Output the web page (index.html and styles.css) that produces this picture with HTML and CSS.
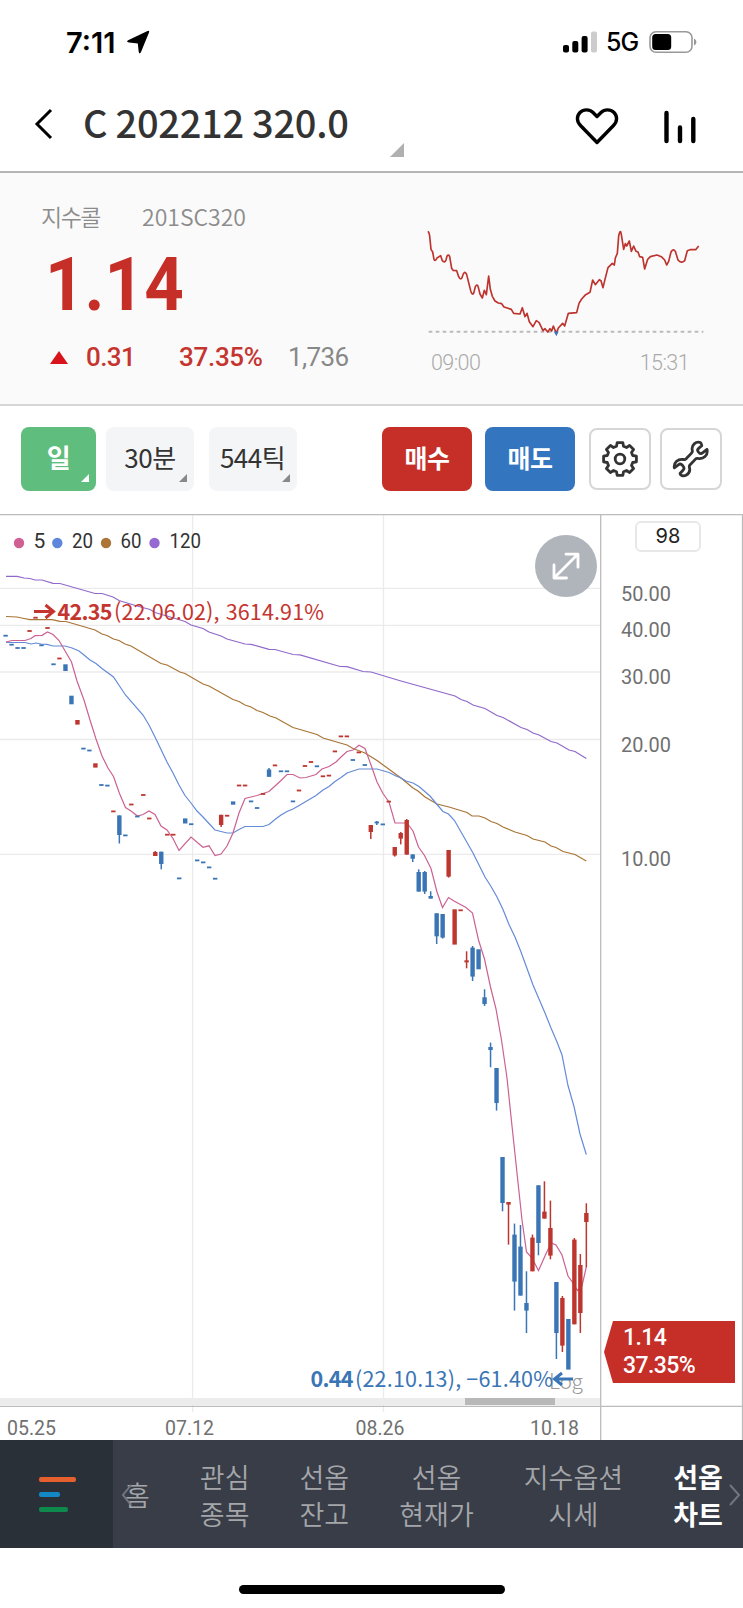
FILE: index.html
```html
<!DOCTYPE html>
<html lang="ko">
<head>
  <meta charset="UTF-8">
  <meta name="viewport" content="width=device-width, initial-scale=1.0">
  <title>선옵차트</title>
  <link rel="stylesheet" href="styles.css">
</head>
<body>
  <div class="status">
    <span class="time">7:11</span>
    <svg class="loc" width="24" height="24" viewBox="0 0 24 24"><path d="M23 2.500 15 22q-1.500 3-2.300-.3L11.800 13.500 3 12.500q-3.600-.8-.4-2.400L21 1.200q2.800-1.200 2 1.300z"/></svg>
    <svg class="signal" width="36" height="22" viewBox="0 0 36 22">
      <rect x="0" y="14" width="6" height="7.500" rx="2"/>
      <rect x="9.300" y="10" width="6" height="11.500" rx="2"/>
      <rect x="18.600" y="5" width="6" height="16.500" rx="2"/>
      <rect x="28" y="0.500" width="6" height="21" rx="2" fill="#ccc"/>
    </svg>
    <span class="net">5G</span>
    <svg width="48" height="24" viewBox="0 0 48 24">
      <rect x="1" y="1.700" width="42" height="20.600" rx="6" fill="none" stroke="#999" stroke-width="1.600"/>
      <rect x="3.200" y="4" width="19" height="16" rx="3.500"/>
      <path d="M45 8.500q2.500 1 2.500 3.500t-2.500 3.500z" fill="#999"/>
    </svg>
  </div>

  <div class="header">
    <svg class="back" width="20" height="32" viewBox="0 0 20 32"><path d="M17 2 3 16l14 14" fill="none" stroke="#000" stroke-width="3"/></svg>
    <h1>C 202212 320.0</h1>
    <i class="corner"></i>
    <svg class="heart" width="44" height="38" viewBox="0 0 44 38"><path d="M22 35.500 5.500 18.500C1.500 14.500 1.500 9 5 5.500s9.500-3.500 13 0l4 4 4-4c3.500-3.500 9.500-3.500 13 0s3.500 9-.5 13z" fill="none" stroke="#000" stroke-width="3.400" stroke-linejoin="round"/></svg>
    <svg class="bars" width="34" height="34" viewBox="0 0 34 34"><path d="M3.500 3v28M17 17.500V31M30.300 9v22" stroke="#000" stroke-width="4.400" stroke-linecap="round"/></svg>
  </div>

  <div class="quote">
    <div class="info">
      <div class="code"><span>지수콜</span><span>201SC320</span></div>
      <div class="price">1.14</div>
      <div class="diff">
        <i class="up"></i>
        <span class="chg">0.31</span>
        <span class="rate">37.35%</span>
        <span class="vol">1,736</span>
      </div>
    </div>
    <div class="mini">
      <svg width="290" height="125" viewBox="60 75 870 375">
        <path d="M86 395H910" stroke="#bbb" stroke-width="6" stroke-dasharray="11 10"/>
        <path d="M84 94Q89 100 90 118L93 148 98 156 102 178Q106 186 111 174L122 167 127 182Q134 190 138 180L141 168Q146 162 149 170L155 205 159 211 170 212 176 230Q183 244 187 230 193 208 200 224L212 272Q218 290 222 276L226 260Q232 250 235 262L240 282 247 294 253 271 259 284 266 228 271 268 277 289 285 303 295 309 305 311 312 321 334 328 341 340 360 342 367 323 375 350 381 340 388 365 399 380 409 362 417 367 429 392 435 386 443 396 450 386 455 393 460 378 469 400 475 384 488 370 494 378 505 340 530 338 537 310 545 297 557 284 570 277 578 240 586 254 598 239 603 242 609 263 615 238 624 203 637 190 643 195 646 174 652 160 656 108Q661 84 664 104L671 148 676 131 680 138 688 123 694 154 701 138 708 154 714 156 719 170 728 172 734 207 743 178 751 170 771 165 784 170 794 180 800 195 806 184 813 156Q820 144 826 154L834 180Q844 192 854 182L862 152 870 149 887 149 896 138" fill="none" stroke="#bd342e" stroke-width="5" stroke-linejoin="round"/>
        <path d="M464 394 469 403 473 394" fill="none" stroke="#3a75bd" stroke-width="5"/>
      </svg>
      <div class="hours"><span>09:00</span><span>15:31</span></div>
    </div>
  </div>

  <div class="tools">
    <div class="btn day">일<i></i></div>
    <div class="btn min">30분<i></i></div>
    <div class="btn tick">544틱<i></i></div>
    <div class="btn buy">매수</div>
    <div class="btn sell">매도</div>
    <div class="btn icon gear">
      <svg width="38" height="38" viewBox="0 0 38 38" fill="none" stroke="#333" stroke-width="2.800" stroke-linejoin="round">
        <path id="cog"/>
        <circle cx="19" cy="19" r="4.800"/>
      </svg>
    </div>
    <div class="btn icon">
      <svg width="38" height="38" viewBox="0 0 38 38" fill="none" stroke="#333" stroke-width="2.800" stroke-linejoin="round" stroke-linecap="round">
        <path d="M28.500 2.600C24 1 19 5 20.300 10.500c.3 1.200 0 1.800-.8 2.600l-5.400 5.700c-.8.8-1.500 1-2.600.7C6 18.500 1.500 22.500 2.300 27.800l4-3c1.400-1 3-.8 4 .4l1 1.300c1 1.300.8 2.600-.3 3.700L8 33.500c.2 2.300 3.600 3 6 1.800 3-1.600 4.300-4.800 3.400-8-.3-1 0-1.800.7-2.500l5.400-5.700c.8-.8 1.500-1 2.500-.7 5.500 1 10.300-3 9-9l-4.500 3.500c-1.200 1-2.600.7-3.500-.3l-.7-.8c-1-1.200-.9-2.500.3-3.500l3.200-2.600c-.2-1.400-.6-2.700-1.300-3.100z"/>
      </svg>
    </div>
  </div>

  <div class="chart">
    <svg class="plot" width="743" height="926" viewBox="0 514 743 926">
      <path class="grid" d="M0 588.400H600M0 625.300H600M0 672H600M0 739.500H600M0 854.400H600M192.600 515V1412M383.500 515V1412"/>
      <rect x="0" y="1398" width="600" height="7" fill="#ececec"/>
      <rect x="465" y="1398" width="90" height="7" fill="#b8b8b8"/>
      <path class="frame" d="M0 514.500H743M0 1406.300H743M600.700 514V1440M742.500 514V1440"/>

      <text class="log" x="549" y="1389" textLength="34">Log</text>
      <g id="ma"></g>
      <g id="candles"></g>

      <g class="legend">
        <circle cx="19" cy="543" r="5.200" fill="#d05f94"/><text x="33.500" y="548">5</text>
        <circle cx="57.300" cy="543" r="5.200" fill="#5e87dc"/><text x="72" y="548" textLength="21" lengthAdjust="spacingAndGlyphs">20</text>
        <circle cx="106" cy="543" r="5.200" fill="#ad7438"/><text x="120.500" y="548" textLength="21" lengthAdjust="spacingAndGlyphs">60</text>
        <circle cx="154.500" cy="543" r="5.200" fill="#9668d2"/><text x="169.500" y="548" textLength="31.500" lengthAdjust="spacingAndGlyphs">120</text>
      </g>

      <g class="note high">
        <path d="M34 611.500H53M45.500 605l8 6.500-8 6.500"/>
        <text class="b" x="57.500" y="619.500" textLength="55">42.35</text>
        <text x="114" y="619.500" textLength="210">(22.06.02), 3614.91%</text>
      </g>
      <g class="note low">
        <text class="b" x="310.500" y="1387" textLength="43">0.44</text>
        <text x="355" y="1387" textLength="198">(22.10.13), −61.40%</text>
        <path d="M573 1379H555M562 1373l-7.500 6 7.500 6"/>
      </g>

      <g class="axis">
        <text x="621" y="600.500" textLength="50" lengthAdjust="spacingAndGlyphs">50.00</text>
        <text x="621" y="637" textLength="50" lengthAdjust="spacingAndGlyphs">40.00</text>
        <text x="621" y="683.700" textLength="50" lengthAdjust="spacingAndGlyphs">30.00</text>
        <text x="621" y="751.500" textLength="50" lengthAdjust="spacingAndGlyphs">20.00</text>
        <text x="621" y="866" textLength="50" lengthAdjust="spacingAndGlyphs">10.00</text>
        <text x="7" y="1435" textLength="49" lengthAdjust="spacingAndGlyphs">05.25</text>
        <text x="165" y="1435" textLength="49" lengthAdjust="spacingAndGlyphs">07.12</text>
        <text x="355.500" y="1435" textLength="49" lengthAdjust="spacingAndGlyphs">08.26</text>
        <text x="530" y="1435" textLength="49" lengthAdjust="spacingAndGlyphs">10.18</text>
      </g>
    </svg>
    <div class="count">98</div>
    <div class="expand">
      <svg width="30" height="30" viewBox="0 0 30 30"><path d="M3.500 26.500 26.500 3.500M15 3.200h12v13M3 14v13h12.500" fill="none" stroke="#fff" stroke-width="2.800" stroke-linecap="round" stroke-linejoin="round"/></svg>
    </div>
    <div class="tag">1.14<br><span>37.35%</span></div>
  </div>

  <div class="nav">
    <div class="menu"><i></i><i></i><i></i></div>
    <ul>
      <li>홈</li>
      <li>관심<br>종목</li>
      <li>선옵<br>잔고</li>
      <li>선옵<br>현재가</li>
      <li>지수옵션<br>시세</li>
      <li class="active">선옵<br>차트</li>
    </ul>
    <svg class="prev" width="13" height="24" viewBox="0 0 13 24"><path d="M10 2 2 12l8 10"/></svg>
    <svg class="next" width="13" height="24" viewBox="0 0 13 24"><path d="M2 2l9 10-9 10"/></svg>
  </div>
  <div class="home"><i></i></div>
  <script src="chart.js"></script>
</body>
</html>
```
FILE: styles.css
```css
*{
  margin: 0;
  padding: 0;
  box-sizing: border-box;
}
body{
  width: 743px;
  background-color: #fff;
  font-family: "Noto Sans CJK KR", sans-serif;
  color: #333;
}
li{
  list-style: none;
}
svg{
  display: block;
  flex: none;
}

/* 상태바 */
.status{
  display: flex;
  align-items: center;
  height: 84px;
  padding-left: 66px;
  font-family: Inter, sans-serif;
  color: #000;
}
.time{
  width: 60px;
  font-size: 29px;
  font-weight: 600;
  letter-spacing: 0;
}
.signal{
  margin-left: 413px;
}
.net{
  width: 43px;
  margin-left: 7px;
  font-size: 25px;
  font-weight: 500;
  letter-spacing: -1px;
}

/* 종목 헤더 */
.header{
  display: flex;
  align-items: center;
  height: 89px;
  padding: 0 0 7px 34px;
  border-bottom: 2px solid #b4b6b6;
}
h1{
  width: 306px;
  margin: -5px 0 0 29px;
  font-size: 38px;
  font-weight: 500;
  line-height: 54px;
  letter-spacing: -.3px;
  word-spacing: -2px;
  white-space: nowrap;
}
.corner{
  align-self: flex-end;
  margin: 0 0 7px 1px;
  border-left: 14px solid transparent;
  border-bottom: 14px solid #b0b0b0;
}
.heart{
  margin: 4px 0 0 171px;
}
.bars{
  margin: 5px 0 0 44px;
}

/* 현재가 */
.quote{
  display: flex;
  height: 233px;
  background-color: #fafafa;
  border-bottom: 2px solid #d6d6d6;
}
.info{
  width: 420px;
}
.code{
  display: flex;
  height: 61px;
  padding: 26px 0 0 41px;
  font-size: 23px;
  font-weight: 350;
  line-height: 34px;
  color: #8c8c8c;
}
.code span:first-child{
  width: 101px;
  letter-spacing: -1.5px;
}
.price{
  width: 160px;
  height: 88px;
  padding-left: 45px;
  font-family: Roboto, sans-serif;
  font-size: 75px;
  font-weight: 700;
  line-height: 101px;
  transform: scaleX(.92);
  transform-origin: 45px 0;
  color: #c62e28;
}
.diff{
  display: flex;
  align-items: center;
  height: 70px;
  padding: 0 0 0 50px;
  font-family: Roboto, sans-serif;
  font-size: 26px;
  font-weight: 500;
  color: #c5352f;
}
.up{
  border: solid transparent;
  border-width: 0 9px 13px;
  border-bottom-color: #d8131b;
}
.chg{
  width: 93px;
  margin-left: 18px;
  letter-spacing: -.6px;
}
.rate{
  width: 109px;
  letter-spacing: -.3px;
}
.vol{
  color: #888;
  font-weight: 400;
  letter-spacing: -.6px;
}
.mini{
  padding-top: 52px;
}
.hours{
  display: flex;
  justify-content: space-between;
  width: 258px;
  margin-left: 11px;
  font-family: Roboto, sans-serif;
  font-size: 21.500px;
  font-weight: 300;
  line-height: 25px;
  letter-spacing: -.6px;
  color: #aaa;
}

/* 버튼 */
.tools{
  display: flex;
  height: 108px;
  padding: 21px 0 0 21px;
}
.btn{
  position: relative;
  display: flex;
  justify-content: center;
  align-items: center;
  width: 90px;
  height: 64px;
  padding-bottom: 5px;
  border-radius: 8px;
  font-size: 26px;
  letter-spacing: -.5px;
}
.btn i{
  position: absolute;
  right: 7px;
  bottom: 9px;
  border-left: 8px solid transparent;
  border-bottom: 8px solid #888;
}
.day{
  width: 75px;
  background-color: #5fbd7d;
  color: #fff;
  font-weight: 700;
}
.day i{
  border-bottom-color: #fff;
}
.min, .tick{
  width: 88px;
  margin-left: 10px;
  background-color: #f4f5f7;
}
.tick{
  margin-left: 15px;
  padding-right: 1px;
}
.buy, .sell{
  color: #fff;
  font-weight: 700;
  font-size: 25px;
}
.buy{
  margin-left: 85px;
  background-color: #c62e28;
}
.sell{
  margin-left: 13px;
  background-color: #3375bf;
}
.icon{
  width: 62px;
  height: 62px;
  margin: 1px 0 0 9px;
  padding: 0;
  border: 2px solid #d6d6d6;
}
.gear{
  margin-left: 14px;
}

/* 차트 */
.chart{
  position: relative;
  height: 926px;
}
.grid{
  stroke: #ebebeb;
  stroke-width: 1.300;
}
.frame{
  stroke: #bcbcbc;
  stroke-width: 1.300;
}
#ma polyline{
  fill: none;
  stroke-width: 1.200;
}
.legend, .axis{
  font-family: Roboto, sans-serif;
  font-size: 21px;
  fill: #333;
}
.axis{
  fill: #707070;
}
.log{
  font-size: 21px;
  font-weight: 300;
  fill: #999;
}
.note{
  font-size: 21.500px;
}
.note .b{
  font-weight: 700;
}
.note path{
  fill: none;
  stroke-width: 3;
}
.high{
  fill: #c5352f;
  stroke: none;
}
.high path{
  stroke: #c5352f;
}
.low{
  fill: #3a75b5;
}
.low path{
  stroke: #3a75b5;
}
.count{
  position: absolute;
  left: 635px;
  top: 7px;
  width: 66px;
  height: 31px;
  border: 2px solid #e8e8e8;
  border-radius: 6px;
  font-family: Inter, sans-serif;
  font-size: 20px;
  line-height: 27px;
  text-align: center;
  color: #222;
}
.expand{
  position: absolute;
  left: 535px;
  top: 21px;
  display: flex;
  justify-content: center;
  align-items: center;
  width: 62px;
  height: 62px;
  border-radius: 50%;
  background-color: #b0b5bc;
}
.tag{
  position: absolute;
  left: 604px;
  top: 807px;
  width: 131px;
  height: 62px;
  padding: 3px 0 0 19px;
  background-color: #c62e28;
  clip-path: polygon(9px 0, 100% 0, 100% 100%, 9px 100%, 0 50%);
  font-family: Roboto, sans-serif;
  font-size: 23px;
  font-weight: 500;
  line-height: 28px;
  letter-spacing: -.6px;
  color: #fff;
}

/* 하단 메뉴 */
.nav{
  position: relative;
  display: flex;
  height: 108px;
  background-color: #383d47;
}
.menu{
  display: flex;
  flex-direction: column;
  gap: 10px;
  width: 113px;
  padding: 37px 0 0 39px;
  background-color: #2a3038;
}
.menu i{
  width: 37px;
  height: 5px;
  border-radius: 2px;
  background-color: #e5602e;
}
.menu i:nth-child(2){
  width: 21px;
  background-color: #1487c7;
}
.menu i:nth-child(3){
  width: 29px;
  background-color: #0e8a4c;
}
.nav ul{
  display: flex;
  align-items: center;
  gap: 50px;
  padding: 1px 0 0 12px;
}
.nav li{
  font-size: 27px;
  font-weight: 350;
  line-height: 37px;
  text-align: center;
  white-space: nowrap;
  color: #a4a6aa;
}
.nav .active{
  font-weight: 700;
  color: #fff;
}
.prev, .next{
  position: absolute;
  top: 43px;
  left: 121px;
  fill: none;
  stroke: #72767d;
  stroke-width: 2;
}
.next{
  left: 728px;
}
.home{
  display: flex;
  justify-content: center;
  padding-top: 37px;
  height: 60px;
}
.home i{
  width: 266px;
  height: 9px;
  border-radius: 5px;
  background-color: #000;
}
```
FILE: chart.js
```js
var NS = "http://www.w3.org/2000/svg";
var RED = "#bd362f", BLUE = "#3a75b5";

// 이동평균선
var lines = [
  ["#9068cc", "6,576.3 17,576.3 24,578 30,578.5 35,580 42,580 53,583.3 60,583.5 95,593.5 102,593.5 113,597 119,600.5 137,606 150,609.5 155,612.5 172,617.5 185,621.5 191,625 203,628.5 209,632 221,636 227,639 245,644 251,644.3 269,649.3 275,649.5 293,654.5 300,654.8 340,666.5 347,666.7 363,671.5 371,672 401,681 455,696 461,699.5 467,701.5 473,705 485,708.5 497,715.5 503,717.5 521,727.5 527,729.5 533,733 539,735 551,741.5 557,743 569,750 575,751.5 586.3,758.5"],
  ["#a87434", "6,616.5 17,617 24,618.5 30,619.7 52,619.7 60,621.3 66,621.5 78,625 95,630 102,634 107,635.5 113.5,639 119,640.5 125,644 131,646 161,663.5 167,665 180,672 185,673.5 203,684 209,686 233,699.5 239,701.5 245,705 251,707 257,710.5 263,712.5 270,716 276,718 293,727.5 300,729.5 317,734.5 323,738 347,745 353,748.5 365,753 377,760.5 401,778 413,788 418,791 425,797 437,804 449,807 467,812.5 472,816 479,816 485,818 491,821.5 497,823.5 503,827 515,832 527,835.5 533,839 545,842 551,846 556,847.5 563,851.5 575,854.5 586.3,861"],
  ["#648bd8", "6,642.5 25,642.5 31,644 36,643 41,644 47,644.3 53,646 65,646 72,648 79,651 84,655 90,660 96,663.5 102,668.5 113.5,677 119.5,686 125.5,695 143,715 149,725 155,737 167,762 173,773 179,785 185,795.5 191,803 197,811 203,817 209,823.5 215,830 221,831.5 227,833 233,833 239,829.5 245,826.5 263,826.5 269,824.5 275,819.5 281,815 287,811.5 293,809 300,805 316,795.5 323,790 329,786.5 335,781.5 341,777.5 347,773 359,769 377,769 389,772.5 396,776 401,778 406,781 413,783 419,786.5 430,796 437,804.5 443,811.5 448.5,814 454.5,820.5 473,853 479,865 485,877 491,886.5 497,897 503,909.5 509,924.5 515,937 521,952 527,968.5 533,985 539,999 545,1013 551,1028 557,1042 562,1055 568,1085.5 574,1106.5 580,1134 586.3,1154.5"],
  ["#cb6291", "6,642 12,640.5 25,640.5 31,638.5 35,635.7 42,635.3 47.5,632 53,634.5 59,640.5 71.5,662 77,681 84,700 90,720 96,739 102,756 108,768 113.5,776.5 119.5,793.5 125.5,807.5 131,811 137.5,816 143,814.5 149,811 155,814.5 161,826 167,830 173,838.5 179,850.5 191,837 203,847.3 209,845.8 215,855.5 221,854 227,846 233,833 239,813 245,798.5 257,795.5 269,791.5 275,786 281,780.5 287,774.5 293,774.5 300,778 306,777.5 316,774.5 322,769 329,766.5 336,762 341,757 347,751.5 353,750 359,745.3 365,748.5 371,765 377,782 383,793.5 389,802 395,823 407,823 413,831 418.5,847 424.5,855.5 431,868.5 437,892 442.5,907.5 448.5,897.5 454,901 466,907.5 472.5,913 478.5,940 484.5,959 490.5,987 496,1009 501.5,1040 507,1078 512,1126 517,1173 522,1220 526.5,1252 532,1258 538.5,1270.5 545,1256 551,1243 556,1245 562,1255 568,1276 573,1283 577.5,1290.5 582,1286 586.3,1267"]
];

// 봉: 색, 몸통 위, 몸통 아래, 꼬리 위, 꼬리 아래 (값이 하나면 보합)
var candles = [
  ["b",635.7],["b",644.7],["b",648],["b",648],["r",631],["r",617.7],["b",645.3],["r",628],["b",664.3],["r",658.5],
  ["b",664.3,671],["b",695.7,704.3],["r",720,724.6],["b",748.6],["b",750.5],["r",763.3,767.6],["b",785],["b",785.6],["r",811.4],["b",815.4,835,815.4,843.5],
  ["b",835.4],["r",804.5],["b",816.5],["r",795],["r",818.5],["r",852,856,851,856],["b",851.7,864,851.7,869.3],["r",834.7],["r",834.7],["b",878.4],
  ["b",818.4,823.5],["b",824.2],["b",860.4],["b",862.4],["b",867.4],["b",878.7],["r",814.8,825,814.8,827],["r",815.7],["b",801.4,804.7],["r",785.5],
  ["r",785.5],["b",801.4],["b",808],["r",794],["b",769.5,776.8,768,776.8],["r",765.4],["b",771.3],["b",771.3],["b",801.4],["r",790.5],
  ["r",766],["r",762],["b",766.3],["r",776.3],["r",775.6],["r",751.4],["r",736.4],["r",736.4],["b",760],["r",752.4],
  ["b",765],["r",825,832,825,839],["b",822.5,822.5,821,825],["b",824.4],["r",801.6],["r",847,855.5,847,856.6],["r",833,838.6,832,844.4],["r",820,854.6,819,854.6],["b",854.4,858.7,854.4,862],["b",872,891.6,869.3,891.6],
  ["b",872,891.6,871,894],["b",896,898.6,891.3,898.6],["b",913.3,936.3,913.3,944],["b",914,937.6,914,938.6],["r",850,876.6,850,877.6],["r",909.3,944.6],["r",910.3],["r",960.3,962.4,951.3,968.3],["b",947.6,976.6,946,981],["b",949.3,969.3],
  ["b",997.3,1004,989.3,1006],["b",1047,1050,1042.6,1067.3],["b",1068,1103,1068,1110.6],["b",1157,1203,1157,1211.3],["r",1202,1204.6,1202,1244.6],["b",1234.6,1281.6,1223.6,1310.6],["b",1246.6,1295.6,1225,1295.6],["b",1303,1310.6,1271.3,1333],["r",1237.6,1271.3,1234.6,1271.3],["b",1185.3,1243,1185.3,1255.3],
  ["r",1211.6,1218.6,1181.3,1218.6],["r",1228,1255.6,1200.6,1259.3],["b",1282,1333,1282,1359],["r",1298,1345.6,1296,1352],["b",1319,1369.6],["r",1239.6,1324.3,1238,1324.3],["r",1265,1313,1254,1333],["r",1213,1222,1203.3,1267.3]
];

function add(parent, name, attrs){
  var el = document.createElementNS(NS, name);
  for(var k in attrs){
    el.setAttribute(k, attrs[k]);
  }
  document.getElementById(parent).appendChild(el);
}

for(var i=0;i<lines.length;i++){
  add("ma", "polyline", {points: lines[i][1], stroke: lines[i][0]});
}

for(var i=0;i<candles.length;i++){
  var c = candles[i];
  var x = 5.6 + i * 5.987;
  var color = c[0] == "r" ? RED : BLUE;
  var y1 = c[1], y2 = c[2] || c[1];
  // 몸통이 너무 얇으면 최소 높이로
  if(y2 - y1 < 2){
    y1 -= 0.9;
    y2 = y1 + 1.8;
  }
  add("candles", "rect", {x: x - 2.2, y: y1, width: 4.4, height: y2 - y1, fill: color});
  if(c.length > 3){
    add("candles", "rect", {x: x - 0.75, y: c[3], width: 1.5, height: c[4] - c[3], fill: color});
  }
}

// 톱니바퀴
var d = "";
for(var i=0;i<8;i++){
  var pts = [[-0.27,13.2],[-0.17,16.6],[0.17,16.6],[0.27,13.2]];
  for(var j=0;j<4;j++){
    var a = i * Math.PI / 4 + pts[j][0];
    var px = (19 + pts[j][1] * Math.sin(a)).toFixed(1);
    var py = (19 - pts[j][1] * Math.cos(a)).toFixed(1);
    d += (d ? "L" : "M") + px + " " + py;
  }
}
document.getElementById("cog").setAttribute("d", d + "Z");
```
